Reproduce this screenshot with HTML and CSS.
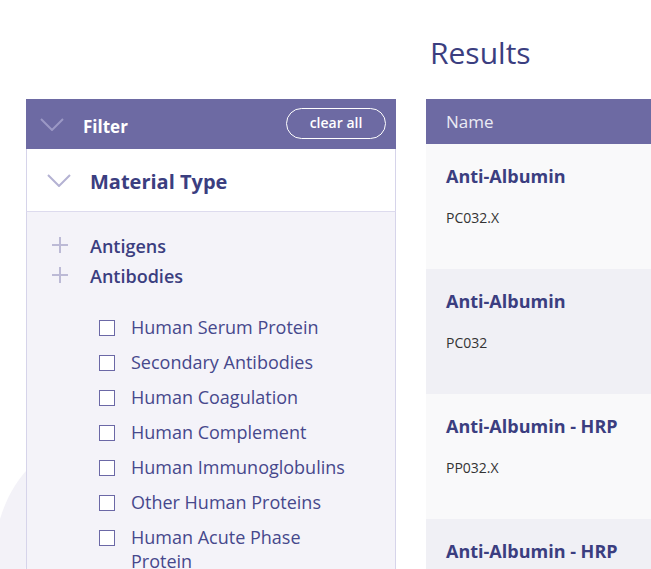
FILE: index.html
```html
<!DOCTYPE html>
<html lang="en">
<head>
<meta charset="utf-8">
<title>Results</title>
<link rel="stylesheet" href="styles.css">
</head>
<body>
<svg class="bg-shape" width="40" height="120" viewBox="0 0 40 120" aria-hidden="true">
  <path d="M28 0 C 16 12, 6 30, 0 50 L 0 120 L 22 120 C 24 110, 26 100, 28 80 Z" fill="#f3f2f8"/>
</svg>
<div class="page">
  <div class="spacer"></div>
  <h1 class="results-title">Results</h1>

  <aside class="filter">
    <div class="filter-head">
      <svg class="chev chev-head" width="24" height="13" viewBox="0 0 24 13"><path d="M1 1 L12 12 L23 1" fill="none" stroke="#9b98c5" stroke-width="2"/></svg>
      <span class="filter-title">Filter</span>
      <button class="clear-btn">clear all</button>
    </div>
    <div class="section-head">
      <svg class="chev" width="24" height="13" viewBox="0 0 24 13"><path d="M1 1 L12 12 L23 1" fill="none" stroke="#b4b2d3" stroke-width="2"/></svg>
      <span class="section-title">Material Type</span>
    </div>
    <div class="section-body">
      <div class="group">
        <svg class="plus" width="16" height="16" viewBox="0 0 16 16"><path d="M8 0 V16 M0 8 H16" stroke="#bcbad6" stroke-width="2"/></svg>
        <span class="group-title">Antigens</span>
      </div>
      <div class="group">
        <svg class="plus" width="16" height="16" viewBox="0 0 16 16"><path d="M8 0 V16 M0 8 H16" stroke="#bcbad6" stroke-width="2"/></svg>
        <span class="group-title">Antibodies</span>
      </div>
      <ul class="checks">
        <li><span class="box"></span><span class="label">Human Serum Protein</span></li>
        <li><span class="box"></span><span class="label">Secondary Antibodies</span></li>
        <li><span class="box"></span><span class="label">Human Coagulation</span></li>
        <li><span class="box"></span><span class="label">Human Complement</span></li>
        <li><span class="box"></span><span class="label">Human Immunoglobulins</span></li>
        <li><span class="box"></span><span class="label">Other Human Proteins</span></li>
        <li><span class="box"></span><span class="label">Human Acute Phase Protein</span></li>
      </ul>
    </div>
  </aside>

  <section class="results">
    <div class="table-head">Name</div>
    <div class="row row-light">
      <div class="row-name">Anti-Albumin</div>
      <div class="row-code">PC032.X</div>
    </div>
    <div class="row row-dark">
      <div class="row-name">Anti-Albumin</div>
      <div class="row-code">PC032</div>
    </div>
    <div class="row row-light">
      <div class="row-name">Anti-Albumin - HRP</div>
      <div class="row-code">PP032.X</div>
    </div>
    <div class="row row-dark">
      <div class="row-name">Anti-Albumin - HRP</div>
      <div class="row-code">PP032</div>
    </div>
  </section>
</div>
</body>
</html>
```

FILE: styles.css
```css
html, body {
  margin: 0;
  padding: 0;
  overflow: hidden;
  background: #ffffff;
}
body {
  font-family: "Open Sans", "Liberation Sans", sans-serif;
  position: relative;
  height: 569px;
}
.bg-shape {
  position: absolute;
  left: 0;
  top: 469px;
  z-index: 0;
}
.page {
  position: relative;
  z-index: 1;
  display: grid;
  grid-template-columns: 370px 520px;
  grid-template-rows: 99px auto;
  column-gap: 30px;
  padding-left: 26px;
}
.spacer { grid-column: 1; grid-row: 1; }
.results-title {
  grid-column: 2;
  grid-row: 1;
  margin: 0;
  padding: 33px 0 0 4px;
  font-size: 30px;
  line-height: 40px;
  font-weight: 400;
  color: #3b3e80;
}

/* Filter panel */
.filter {
  grid-column: 1;
  grid-row: 2;
  display: flex;
  flex-direction: column;
}
.filter-head {
  height: 50px;
  background: #6d6aa3;
  display: flex;
  align-items: center;
  padding: 0 10px 0 14px;
}
.chev-head { margin-top: 1px; }
.filter-title {
  margin-left: 19px;
  color: #ffffff;
  font-weight: 700;
  font-size: 17px;
  margin-top: 4px;
}
.clear-btn {
  margin-left: auto;
  width: 100px;
  height: 31px;
  border: 1px solid #ffffff;
  border-radius: 16px;
  background: transparent;
  color: #ffffff;
  font-family: inherit;
  font-weight: 600;
  font-size: 14px;
  padding: 0 0 2px;
  margin-top: -2px;
}
.section-head {
  height: 63px;
  background: #ffffff;
  border-left: 1px solid #d6d4ea;
  border-right: 1px solid #d6d4ea;
  border-bottom: 1px solid #dddbee;
  display: flex;
  align-items: center;
  padding-left: 20px;
  box-sizing: border-box;
}
.section-head .chev { margin-top: 1px; }
.section-title {
  margin-left: 19px;
  font-size: 20px;
  font-weight: 700;
  color: #3b3e80;
  margin-top: 2px;
}
.section-body {
  background: #f4f3f9;
  border-left: 1px solid #d6d4ea;
  border-right: 1px solid #d6d4ea;
  padding: 19px 0 40px 25px;
  height: 400px;
}
.group {
  display: flex;
  align-items: center;
  height: 30px;
}
.plus { margin-right: 22px; margin-top: -2px; }
.group-title {
  font-size: 18px;
  font-weight: 600;
  color: #3b3e80;
}
.checks {
  list-style: none;
  margin: 24px 0 0;
  padding: 0 0 0 47px;
}
.checks li {
  display: flex;
  align-items: flex-start;
  margin-bottom: 11px;
}
.box {
  flex: none;
  width: 14px;
  height: 14px;
  border: 1.5px solid #6b68a6;
  background: #ffffff;
  margin-top: 5px;
}
.label {
  margin-left: 16px;
  font-size: 18px;
  line-height: 24px;
  color: #46488c;
  width: 225px;
}

/* Results */
.results {
  grid-column: 2;
  grid-row: 2;
}
.table-head {
  height: 45px;
  background: #6d6aa3;
  color: #ebebf4;
  font-size: 17px;
  font-weight: 400;
  line-height: 45px;
  padding-left: 20px;
}
.row {
  height: 125px;
  padding: 0 20px;
  box-sizing: border-box;
  padding-top: 18px;
}
.row-light { background: #f9f9fa; }
.row-dark { background: #f0f0f5; }
.row-name {
  font-size: 18px;
  font-weight: 700;
  color: #3b3e80;
  line-height: 28px;
}
.row-code {
  margin-top: 18px;
  font-size: 14px;
  color: #333333;
  line-height: 20px;
}
```
